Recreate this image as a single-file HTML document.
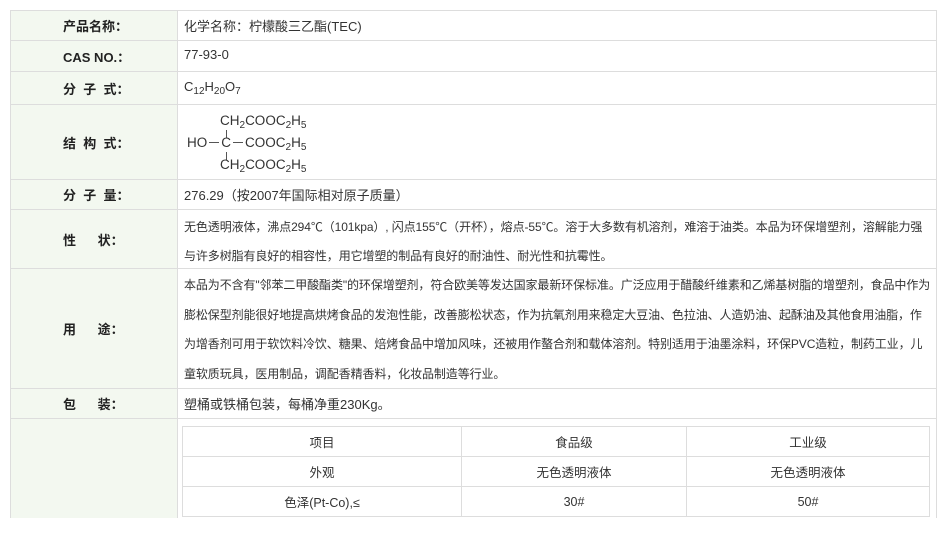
<!DOCTYPE html>
<html><head><meta charset="utf-8"><style>
*{margin:0;padding:0;box-sizing:border-box}
body{width:949px;height:533px;background:#fff;font-family:"Liberation Sans","Noto Sans CJK SC",sans-serif;font-size:13px;color:#333;position:relative;overflow:hidden}
.l{position:absolute;left:10px;width:167px;background:#f3f8f0;border:1px solid #ddd;border-right:none;border-bottom:none;font-weight:bold;color:#222}
.c{position:absolute;left:177px;width:760px;border:1px solid #ddd;border-bottom:none;padding-left:6px;white-space:nowrap;overflow:hidden}
.lt{position:absolute;left:52px;white-space:pre}
.long{font-size:12px;letter-spacing:-0.1px}
.it{position:absolute;left:182px;width:748px;border-collapse:collapse;font-size:12.5px}
.it td{border:1px solid #ddd;height:30px;text-align:center}
sub{font-size:10px;vertical-align:-3px}
</style></head><body>
<div class="l" style="top:10px;height:30px"><span class="lt" style="top:5px">产品名称：</span></div>
<div class="c" style="top:10px;height:30px;padding-top:5px">化学名称：柠檬酸三乙酯(TEC)</div>
<div class="l" style="top:40px;height:31px"><span class="lt" style="top:6px">CAS NO.：</span></div>
<div class="c" style="top:40px;height:31px;padding-top:6px">77-93-0</div>
<div class="l" style="top:71px;height:33px"><span class="lt" style="top:7px">分  子  式：</span></div>
<div class="c" style="top:71px;height:33px;padding-top:7px">C<sub>12</sub>H<sub>20</sub>O<sub>7</sub></div>
<div class="l" style="top:104px;height:75px"><span class="lt" style="top:28px">结  构  式：</span></div>
<div class="c" style="top:104px;height:75px;font-size:13.5px">
<div style="position:absolute;left:42px;top:8px">CH<sub>2</sub>COOC<sub>2</sub>H<sub>5</sub></div>
<div style="position:absolute;left:48px;top:25px;width:1px;height:8px;background:#555"></div>
<div style="position:absolute;left:9px;top:30px">HO<span style="display:inline-block;width:10px;height:1px;background:#555;vertical-align:4px;margin:0 2px"></span>C<span style="display:inline-block;width:10px;height:1px;background:#555;vertical-align:4px;margin:0 2px"></span>COOC<sub>2</sub>H<sub>5</sub></div>
<div style="position:absolute;left:48px;top:47px;width:1px;height:8px;background:#555"></div>
<div style="position:absolute;left:42px;top:52px">CH<sub>2</sub>COOC<sub>2</sub>H<sub>5</sub></div>
</div>
<div class="l" style="top:179px;height:30px"><span class="lt" style="top:5px">分  子  量：</span></div>
<div class="c" style="top:179px;height:30px;padding-top:5px">276.29（按2007年国际相对原子质量）</div>
<div class="l" style="top:209px;height:59px"><span class="lt" style="top:20px">性      状：</span></div>
<div class="c long" style="top:209px;height:59px;line-height:29px;padding-top:3px">无色透明液体，沸点294℃（101kpa）, 闪点155℃（开杯），熔点-55℃。溶于大多数有机溶剂，难溶于油类。本品为环保增塑剂，溶解能力强<br>与许多树脂有良好的相容性，用它增塑的制品有良好的耐油性、耐光性和抗霉性。</div>
<div class="l" style="top:268px;height:120px"><span class="lt" style="top:50px">用      途：</span></div>
<div class="c long" style="top:268px;height:120px;line-height:29.5px;padding-top:2px">本品为不含有"邻苯二甲酸酯类"的环保增塑剂，符合欧美等发达国家最新环保标准。广泛应用于醋酸纤维素和乙烯基树脂的增塑剂，食品中作为<br>膨松保型剂能很好地提高烘烤食品的发泡性能，改善膨松状态，作为抗氧剂用来稳定大豆油、色拉油、人造奶油、起酥油及其他食用油脂，作<br>为增香剂可用于软饮料冷饮、糖果、焙烤食品中增加风味，还被用作螯合剂和载体溶剂。特别适用于油墨涂料，环保PVC造粒，制药工业，儿<br>童软质玩具，医用制品，调配香精香料，化妆品制造等行业。</div>
<div class="l" style="top:388px;height:30px"><span class="lt" style="top:5px">包      装：</span></div>
<div class="c" style="top:388px;height:30px;padding-top:5px">塑桶或铁桶包装，每桶净重230Kg。</div>
<div class="l" style="top:418px;height:100px"></div>
<div class="c" style="top:418px;height:100px"></div>
<table class="it" style="top:426px">
<tr><td style="width:279px">项目</td><td style="width:225px">食品级</td><td>工业级</td></tr>
<tr><td>外观</td><td>无色透明液体</td><td>无色透明液体</td></tr>
<tr><td>色泽(Pt-Co),≤</td><td>30#</td><td>50#</td></tr>
</table>
<div style="position:absolute;left:0;top:518px;width:949px;height:15px;background:#fff"></div>
</body></html>
